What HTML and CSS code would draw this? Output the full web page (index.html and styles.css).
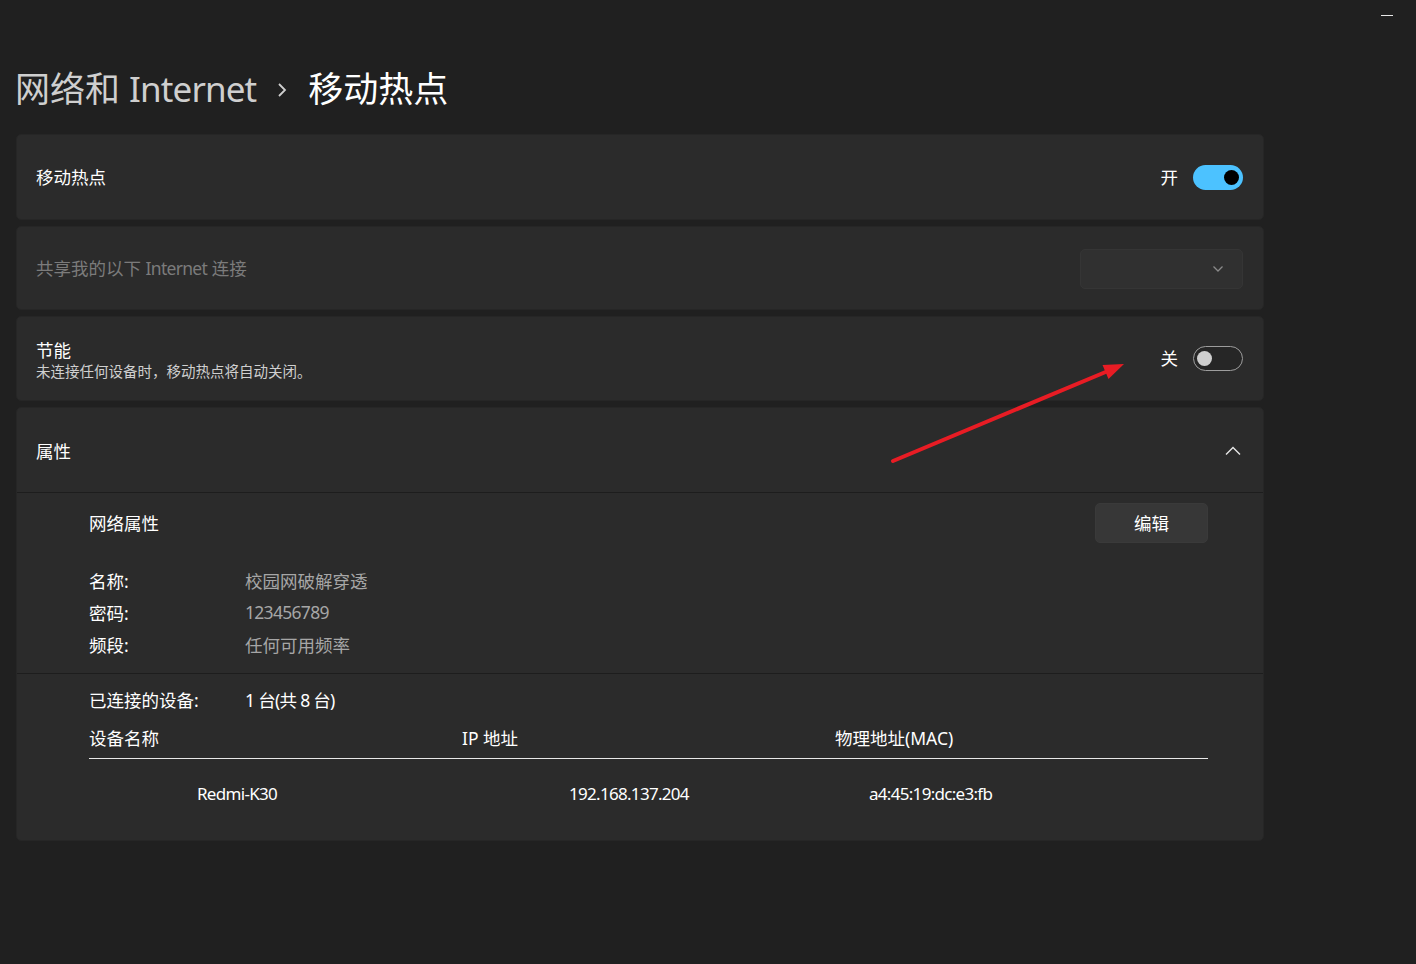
FILE: index.html
```html
<!DOCTYPE html>
<html lang="zh-CN">
<head>
<meta charset="utf-8">
<title>移动热点</title>
<link rel="stylesheet" href="styles.css">
</head>
<body>
<div class="window">
  <div class="titlebar"><span class="min-glyph"></span></div>
  <div class="page">
    <h1 class="title">
      <span class="crumb">网络和 <span class="lat-title">Internet</span></span>
      <svg class="crumb-sep" width="10" height="16" viewBox="0 0 10 16"><path d="M2 2 L8 8 L2 14" fill="none" stroke="#cfcfcf" stroke-width="1.8"/></svg>
      <span class="current">移动热点</span>
    </h1>

    <div class="cards">
      <div class="card row-card h86">
        <div class="label">移动热点</div>
        <div class="ctrl">
          <span class="state">开</span>
          <span class="toggle on"><span class="knob"></span></span>
        </div>
      </div>

      <div class="card row-card h84">
        <div class="label disabled">共享我的以下 <span class="lat">Internet</span> 连接</div>
        <div class="dropdown">
          <svg width="12" height="8" viewBox="0 0 12 8"><path d="M1.5 1.5 L6 6 L10.5 1.5" fill="none" stroke="#8a8a8a" stroke-width="1.3"/></svg>
        </div>
      </div>

      <div class="card row-card h85">
        <div class="label-stack">
          <div class="label">节能</div>
          <div class="sub">未连接任何设备时，移动热点将自动关闭。</div>
        </div>
        <div class="ctrl">
          <span class="state">关</span>
          <span class="toggle off"><span class="knob"></span></span>
        </div>
      </div>

      <div class="card props">
        <div class="props-head">
          <div class="label">属性</div>
          <svg class="chev-up" width="16" height="10" viewBox="0 0 16 10"><path d="M1 8.5 L8 1.5 L15 8.5" fill="none" stroke="#e6e6e6" stroke-width="1.4"/></svg>
        </div>
        <div class="divider"></div>
        <div class="net">
          <div class="net-head">
            <div class="label">网络属性</div>
            <button class="btn">编辑</button>
          </div>
          <div class="kv"><span class="k">名称:</span><span class="v">校园网破解穿透</span></div>
          <div class="kv"><span class="k">密码:</span><span class="v lat">123456789</span></div>
          <div class="kv"><span class="k">频段:</span><span class="v">任何可用频率</span></div>
        </div>
        <div class="divider"></div>
        <div class="devices">
          <div class="kv"><span class="k">已连接的设备:</span><span class="v white lat">1 台(共 8 台)</span></div>
          <div class="table-head">
            <span>设备名称</span>
            <span>IP 地址</span>
            <span>物理地址(MAC)</span>
          </div>
          <div class="table-row">
            <span class="c1">Redmi-K30</span>
            <span class="c2">192.168.137.204</span>
            <span class="c3">a4:45:19:dc:e3:fb</span>
          </div>
        </div>
      </div>
    </div>
  </div>

  <svg class="annot" width="1416" height="964" viewBox="0 0 1416 964">
    <line x1="893" y1="461" x2="1108" y2="371" stroke="#e81c24" stroke-width="4" stroke-linecap="round"/>
    <polygon points="1124,364 1102.5,365 1108.5,379" fill="#e81c24"/>
  </svg>
</div>
</body>
</html>
```

FILE: styles.css
```css
* { box-sizing: border-box; }
html, body {
  margin: 0;
  padding: 0;
  background: #202020;
}
body {
  font-family: "Noto Sans", "Noto Sans CJK SC", sans-serif;
  color: #ffffff;
  font-size: 17.5px;
}
.window {
  position: relative;
  width: 1416px;
  height: 964px;
  overflow: hidden;
}
.titlebar {
  height: 30px;
  display: flex;
  justify-content: flex-end;
  padding-right: 23px;
}
.min-glyph {
  display: block;
  width: 12px;
  height: 1px;
  margin-top: 15px;
  background: #e8e8e8;
}
.page {
  padding: 0 152px 0 16px;
}
.title {
  margin: 35px 0 21px -1px;
  height: 48px;
  display: flex;
  align-items: center;
  font-weight: 400;
  font-size: 35px;
  line-height: 48px;
  font-family: "Noto Sans", "Noto Sans CJK SC", sans-serif;
}
.crumb { color: #cfcfcf; }
.lat-title { letter-spacing: -0.9px; }
.lat { letter-spacing: -0.7px; }
.crumb-sep { margin: 2px 21px 0 21px; }
.current { color: #ffffff; }

.cards {
  display: flex;
  flex-direction: column;
  gap: 6px;
}
.card {
  background: #2b2b2b;
  border-radius: 5px;
  border: 1px solid #262626;
}
.row-card {
  display: flex;
  align-items: center;
  justify-content: space-between;
  padding: 0 20px 0 19px;
}
.h86 { height: 86px; }
.h84 { height: 84px; }
.h85 { height: 85px; }
.label {
  font-size: 17.5px;
  line-height: 24px;
  color: #ffffff;
}
.label.disabled { color: #7b7b7b; }
.label-stack { display: flex; flex-direction: column; margin-top: 2px; }
.label-stack .label { line-height: 22px; }
.sub {
  font-size: 14.5px;
  line-height: 20px;
  color: #cfcfcf;
}
.ctrl {
  display: flex;
  align-items: center;
}
.state {
  font-size: 17.5px;
  line-height: 24px;
  margin-right: 15px;
  margin-top: -1px;
}
.toggle {
  position: relative;
  display: block;
  width: 50px;
  height: 25px;
  border-radius: 13px;
}
.toggle.on { background: #4cc2ff; }
.toggle.off { border: 1px solid #9d9d9d; background: #262626; }
.knob {
  position: absolute;
  top: 5px;
  width: 15px;
  height: 15px;
  border-radius: 50%;
}
.toggle.on .knob { right: 4px; background: #000000; }
.toggle.off .knob { left: 3px; top: 4px; background: #cfcfcf; }
.dropdown {
  width: 163px;
  height: 40px;
  margin-top: 2px;
  background: #303030;
  border: 1px solid #353535;
  border-radius: 5px;
  display: flex;
  align-items: center;
  justify-content: flex-end;
  padding-right: 18px;
}

.props { display: flex; flex-direction: column; height: 434px; }
.props-head {
  height: 84px;
  display: flex;
  align-items: center;
  justify-content: space-between;
  padding: 2px 22px 0 19px;
}
.divider {
  height: 1px;
  background: #1d1d1d;
}
.net {
  padding: 10px 55px 13px 72px;
}
.net-head {
  display: flex;
  align-items: center;
  justify-content: space-between;
  height: 40px;
  margin-bottom: 21px;
}
.btn {
  width: 113px;
  height: 40px;
  border: 1px solid #3a3a3a;
  border-radius: 5px;
  background: #373737;
  color: #ffffff;
  font-family: "Noto Sans", "Noto Sans CJK SC", sans-serif;
  font-size: 17.5px;
  padding: 0 0 2px 0;
}
.kv {
  display: flex;
  height: 32px;
  align-items: center;
  font-size: 17.5px;
}
.k { width: 156px; color: #ffffff; }
.v { color: #a6a6a6; }
.v.white { color: #ffffff; }
.devices {
  padding: 9px 55px 0 72px;
}
.table-head {
  display: grid;
  grid-template-columns: 373px 373px 1fr;
  height: 38px;
  margin-top: 6px;
  align-items: center;
  padding-bottom: 5px;
  border-bottom: 1.5px solid #e8e8e8;
  font-size: 17.5px;
}
.table-row {
  display: grid;
  grid-template-columns: 373px 373px 1fr;
  height: 32px;
  margin-top: 18px;
  align-items: center;
  font-size: 17px;
  letter-spacing: -0.7px;
}
.c1 { padding-left: 108px; }
.c2 { padding-left: 107px; }
.c3 { padding-left: 34px; }
.annot {
  position: absolute;
  left: 0;
  top: 0;
  pointer-events: none;
}
```
